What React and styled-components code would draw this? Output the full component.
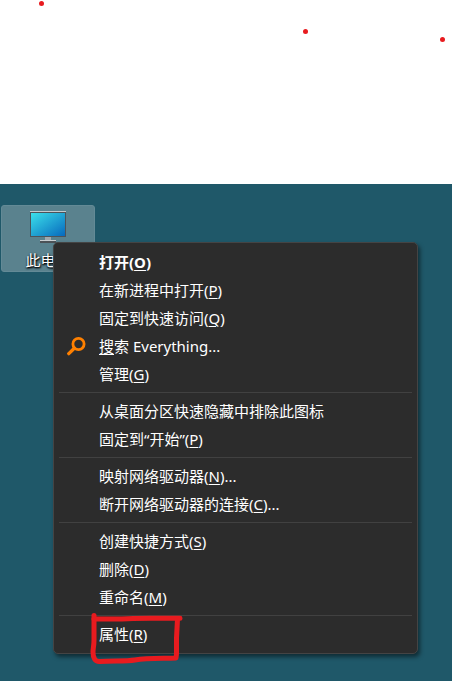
import React from "react";
import styled, { createGlobalStyle } from "styled-components";

const GlobalStyle = createGlobalStyle`
  * { box-sizing: border-box; }
  body {
    margin: 0;
    background: #fff;
    font-family: "Noto Sans", "Noto Sans CJK SC", sans-serif;
    font-size: 15px;
  }
`;

const Page = styled.div`
  display: flex;
  flex-direction: column;
  min-height: 100vh;
`;

const Blank = styled.header`
  position: relative;
  height: 184px;
`;

const Dot = styled.span`
  position: absolute;
  left: ${(p) => p.$x}px;
  top: ${(p) => p.$y}px;
  width: 5px;
  height: 5px;
  border-radius: 50%;
  background: #e81b1f;
`;

const Desktop = styled.main`
  position: relative;
  flex: 1;
  padding: 21px 1px;
  background: #1f5869;
  overflow: hidden;
`;

const Shortcut = styled.button`
  display: flex;
  flex-direction: column;
  align-items: center;
  width: 94px;
  height: 67px;
  padding: 5px 0 0;
  border: 1px solid #638a96;
  border-radius: 3px;
  background: #5a828e;
  color: #fff;
  font: inherit;
`;

const ShortcutLabel = styled.span`
  margin-top: 4px;
  line-height: 22px;
  text-shadow: 1px 1px 2px #000, 0 1px 2px #000;
`;

const Menu = styled.div`
  position: absolute;
  left: 53px;
  top: 58px;
  width: 365px;
  padding: 5px;
  border: 1px solid #444;
  border-radius: 5px;
  background: #2c2c2c;
  box-shadow: 2px 3px 4px rgba(0, 0, 0, 0.5);
`;

const Item = styled.button`
  position: relative;
  display: grid;
  grid-template-columns: 40px 1fr;
  align-items: center;
  width: 100%;
  height: 28px;
  padding: 0;
  border: 0;
  background: none;
  color: #fff;
  font: inherit;
  font-weight: ${(p) => (p.$bold ? 700 : 400)};
  line-height: 28px;
  text-align: left;
  white-space: nowrap;
`;

const IconSlot = styled.span`
  display: flex;
  padding-left: 7px;
`;

const Key = styled.u`
  text-decoration-thickness: 1px;
  text-underline-offset: 2px;
`;

const Divider = styled.hr`
  height: 1px;
  margin: 4px 0;
  border: 0;
  background: #414141;
`;

const Mark = styled.svg`
  position: absolute;
  left: 30px;
  top: -10px;
  pointer-events: none;
`;

function Monitor() {
  return (
    <svg width="38" height="34" viewBox="0 0 38 34" aria-hidden="true">
      <defs>
        <linearGradient id="screen" x1="0" y1="0" x2="1" y2="1">
          <stop offset="0" stopColor="#3be0ea" />
          <stop offset="1" stopColor="#0769bd" />
        </linearGradient>
      </defs>
      <path d="M16 26h6v4h-6z" fill="#a2a9ae" />
      <path d="M11 29h16v1H11z" fill="#c9ced1" />
      <path d="M11 30h16v2H11z" fill="#4b5257" />
      <path d="M1 0h36v26H1z" fill="#4c535a" />
      <path d="M1 0h36v1H1z" fill="#c5cacd" />
      <path d="M2 2h34v23H2z" fill="url(#screen)" />
    </svg>
  );
}

function Magnifier() {
  return (
    <svg width="20" height="20" viewBox="0 0 20 20" fill="none" stroke="#ff8000" aria-hidden="true">
      <circle cx="12.5" cy="8" r="5.6" strokeWidth="2.8" />
      <path d="M8.3 12.2 2.8 17.6" strokeWidth="3.4" strokeLinecap="round" />
    </svg>
  );
}

function RedBox() {
  return (
    <Mark
      width="100"
      height="60"
      viewBox="0 0 100 60"
      fill="none"
      stroke="#e81b1f"
      strokeWidth="5"
      strokeLinecap="round"
      strokeLinejoin="round"
      aria-hidden="true"
    >
      <path d="M5 5.5V30C5 36 4 38 4 42C4 48 6 52 11 51.500C24 50.500 36 51.500 46 50C58 48 72 48.500 87 48L87.500 44V28L88.500 9" />
      <path d="M5 9H33C45 8 56 8.500 91 8.300" />
    </Mark>
  );
}

const groups = [
  [
    { before: "打开(", k: "O", after: ")", bold: true },
    { before: "在新进程中打开(", k: "P", after: ")" },
    { before: "固定到快速访问(", k: "Q", after: ")" },
    { before: "", k: "搜", after: "索 Everything...", icon: true },
    { before: "管理(", k: "G", after: ")" },
  ],
  [
    { before: "从桌面分区快速隐藏中排除此图标" },
    { before: "固定到“开始”(", k: "P", after: ")" },
  ],
  [
    { before: "映射网络驱动器(", k: "N", after: ")..." },
    { before: "断开网络驱动器的连接(", k: "C", after: ")..." },
  ],
  [
    { before: "创建快捷方式(", k: "S", after: ")" },
    { before: "删除(", k: "D", after: ")" },
    { before: "重命名(", k: "M", after: ")" },
  ],
  [{ before: "属性(", k: "R", after: ")", marked: true }],
];

export default function App() {
  return (
    <Page lang="zh-CN">
      <GlobalStyle />
      <Blank>
        <Dot $x={39} $y={1} />
        <Dot $x={303} $y={29} />
        <Dot $x={440} $y={37} />
      </Blank>
      <Desktop>
        <Shortcut type="button">
          <Monitor />
          <ShortcutLabel>此电脑</ShortcutLabel>
        </Shortcut>
        <Menu role="menu">
          {groups.map((items, g) => (
            <React.Fragment key={g}>
              {g > 0 && <Divider />}
              {items.map((it) => (
                <Item key={it.before + it.k} type="button" role="menuitem" $bold={it.bold}>
                  <IconSlot>{it.icon && <Magnifier />}</IconSlot>
                  <span>
                    {it.before}
                    {it.k && <Key>{it.k}</Key>}
                    {it.after}
                  </span>
                  {it.marked && <RedBox />}
                </Item>
              ))}
            </React.Fragment>
          ))}
        </Menu>
      </Desktop>
    </Page>
  );
}
